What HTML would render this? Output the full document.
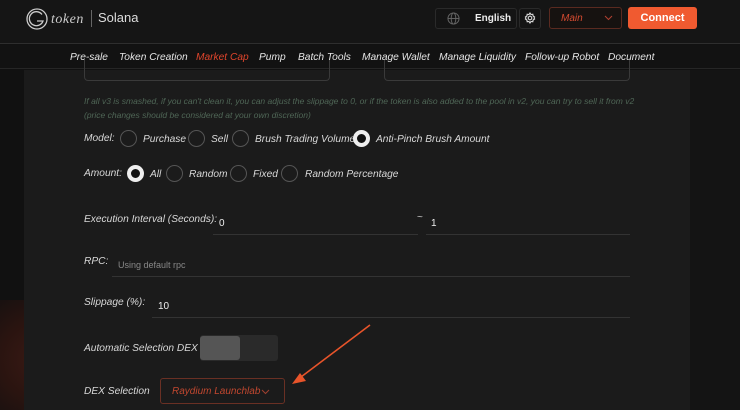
<!DOCTYPE html>
<html><head><meta charset="utf-8"><style>
*{margin:0;padding:0;box-sizing:border-box}
body{width:740px;height:410px;overflow:hidden;background:#111;font-family:"Liberation Sans",sans-serif;position:relative;color:#ddd}
.abs{position:absolute}
.hdr{left:0;top:0;width:740px;height:44px;background:#151515;border-bottom:1px solid #2e2e2e}
.nav{left:0;top:45px;width:740px;height:24px;background:#121212;border-bottom:1px solid #262626}
.nav span{position:absolute;top:1px;line-height:24px;font-size:10.2px;font-style:italic;color:#e6e6e6;white-space:nowrap}
.panel{left:24px;top:70px;width:666px;height:340px;background:#1b1b1b}
.lbl{font-size:10.2px;font-style:italic;color:#d8d8d8;white-space:nowrap;line-height:12px}
.radio{width:17px;height:17px;border-radius:50%;border:1px solid #555}
.radio.on{border:4px solid #eee;background:#111}
.line{height:1px;background:#333}
</style></head><body>
<div class="abs" style="left:0;top:300px;width:24px;height:110px;background:radial-gradient(circle at 40px 60px,#3a1a14 0,#2a1410 40px,#141010 80px)"></div>
<div class="abs" style="left:690px;top:70px;width:50px;height:340px;background:#141414"></div>
<div class="abs panel"></div>
<div class="abs hdr"></div>
<svg class="abs" style="left:25px;top:7px" width="24" height="24" viewBox="0 0 24 24"><circle cx="12" cy="12" r="10" fill="none" stroke="#ccc" stroke-width="1.3"/><path d="M17 7.5A7 7 0 1 0 18 14H12" fill="none" stroke="#ccc" stroke-width="1.3"/></svg>
<div class="abs" style="left:51px;top:12px;font-family:'Liberation Serif',serif;font-style:italic;font-size:14px;color:#ccc;letter-spacing:0.5px">token</div>
<div class="abs" style="left:91px;top:10px;width:1px;height:17px;background:#666"></div>
<div class="abs" style="left:98px;top:10px;font-size:13px;color:#ddd">Solana</div>
<div class="abs" style="left:435px;top:8px;width:82px;height:21px;border:1px solid #2a2a2a;border-radius:3px;background:#141414"></div>
<svg class="abs" style="left:447px;top:12px" width="13" height="13" viewBox="0 0 14 14" fill="none" stroke="#666" stroke-width="1"><circle cx="7" cy="7" r="6"/><ellipse cx="7" cy="7" rx="2.5" ry="6"/><path d="M1 7h12"/></svg>
<div class="abs" style="left:475px;top:8px;line-height:21px;font-size:10px;font-weight:bold;color:#eee">English</div>
<div class="abs" style="left:519px;top:8px;width:22px;height:21px;border:1px solid #2a2a2a;border-radius:3px;background:#141414"></div>
<svg class="abs" style="left:524px;top:12px" width="12" height="12" viewBox="0 0 12 12" fill="none" stroke="#ddd" stroke-width="1.1"><circle cx="6" cy="6" r="1.8"/><path d="M6 1l1 1.5 1.8-.3.3 1.8L10.6 5 10 6l.6 1-1.5 1 -.3 1.8-1.8-.3L6 11 5 9.5l-1.8.3-.3-1.8L1.4 7 2 6l-.6-1 1.5-1 .3-1.8 1.8.3z"/></svg>
<div class="abs" style="left:549px;top:7px;width:73px;height:22px;border:1px solid #5a2a20;border-radius:3px;background:#161210"></div>
<div class="abs" style="left:561px;top:8px;line-height:22px;font-size:10px;font-style:italic;color:#d44a30">Main</div>
<svg class="abs" style="left:604px;top:15px" width="9" height="6" viewBox="0 0 9 6"><path d="M1 1l3.5 3.5L8 1" fill="none" stroke="#b04030" stroke-width="1"/></svg>
<div class="abs" style="left:628px;top:7px;width:69px;height:22px;border-radius:3px;background:#f05a30;color:#fff;font-size:11px;font-weight:bold;text-align:center;line-height:22px">Connect</div>
<div class="abs nav">
<span style="left:70px">Pre-sale</span><span style="left:119px">Token Creation</span><span style="left:196px;color:#e0452c">Market Cap</span><span style="left:259px">Pump</span><span style="left:298px">Batch Tools</span><span style="left:362px">Manage Wallet</span><span style="left:439px">Manage Liquidity</span><span style="left:525px">Follow-up Robot</span><span style="left:608px">Document</span>
</div>
<div class="abs" style="left:84px;top:60px;width:246px;height:21px;border:1px solid #3a3a3a;border-top:none;border-radius:0 0 4px 4px"></div>
<div class="abs" style="left:384px;top:60px;width:246px;height:21px;border:1px solid #3a3a3a;border-top:none;border-radius:0 0 4px 4px"></div>
<div class="abs" style="left:84px;top:94px;font-size:8.5px;font-style:italic;color:#4f6656;line-height:14px;width:560px">If all v3 is smashed, if you can't clean it, you can adjust the slippage to 0, or if the token is also added to the pool in v2, you can try to sell it from v2 (price changes should be considered at your own discretion)</div>
<div class="abs lbl" style="left:84px;top:133px">Model:</div>
<div class="abs radio" style="left:120px;top:130px"></div><div class="abs lbl" style="left:143px;top:134px">Purchase</div>
<div class="abs radio" style="left:188px;top:130px"></div><div class="abs lbl" style="left:211px;top:134px">Sell</div>
<div class="abs radio" style="left:232px;top:130px"></div><div class="abs lbl" style="left:255px;top:134px">Brush Trading Volume</div>
<div class="abs radio on" style="left:353px;top:130px"></div><div class="abs lbl" style="left:376px;top:134px">Anti-Pinch Brush Amount</div>
<div class="abs lbl" style="left:84px;top:168px">Amount:</div>
<div class="abs radio on" style="left:127px;top:165px"></div><div class="abs lbl" style="left:150px;top:169px">All</div>
<div class="abs radio" style="left:166px;top:165px"></div><div class="abs lbl" style="left:189px;top:169px">Random</div>
<div class="abs radio" style="left:230px;top:165px"></div><div class="abs lbl" style="left:253px;top:169px">Fixed</div>
<div class="abs radio" style="left:281px;top:165px"></div><div class="abs lbl" style="left:305px;top:169px">Random Percentage</div>
<div class="abs lbl" style="left:84px;top:214px">Execution Interval (Seconds):</div>
<div class="abs" style="left:219px;top:218px;font-size:10px;color:#eee">0</div>
<div class="abs line" style="left:213px;top:234px;width:205px"></div>
<div class="abs" style="left:417px;top:212px;font-size:10px;color:#ccc">~</div>
<div class="abs" style="left:431px;top:218px;font-size:10px;color:#eee">1</div>
<div class="abs line" style="left:426px;top:234px;width:204px"></div>
<div class="abs lbl" style="left:84px;top:256px">RPC:</div>
<div class="abs" style="left:118px;top:260px;font-size:9px;color:#888">Using default rpc</div>
<div class="abs line" style="left:112px;top:276px;width:518px"></div>
<div class="abs lbl" style="left:84px;top:297px">Slippage (%):</div>
<div class="abs" style="left:158px;top:301px;font-size:10px;color:#eee">10</div>
<div class="abs line" style="left:152px;top:317px;width:478px"></div>
<div class="abs lbl" style="left:84px;top:343px">Automatic Selection DEX</div>
<div class="abs" style="left:200px;top:335px;width:78px;height:26px;border-radius:3px;background:#2a2a2a"></div>
<div class="abs" style="left:200px;top:336px;width:40px;height:24px;border-radius:3px;background:#555"></div>
<div class="abs lbl" style="left:84px;top:386px">DEX Selection</div>
<div class="abs" style="left:160px;top:378px;width:125px;height:26px;border:1px solid #6a3024;border-radius:3px"></div>
<div class="abs" style="left:172px;top:379px;line-height:26px;font-size:10px;font-style:italic;color:#c0472f">Raydium Launchlab</div>
<svg class="abs" style="left:261px;top:389px" width="9" height="6" viewBox="0 0 9 6"><path d="M1 1l3.5 3.5L8 1" fill="none" stroke="#a04030" stroke-width="1"/></svg>
<svg class="abs" style="left:280px;top:320px" width="100" height="70" viewBox="0 0 100 70"><path d="M90 5L17 60" stroke="#e8542a" stroke-width="1.6" fill="none"/><path d="M12 64L26 61L20 53Z" fill="#e8542a"/></svg>
</body></html>
